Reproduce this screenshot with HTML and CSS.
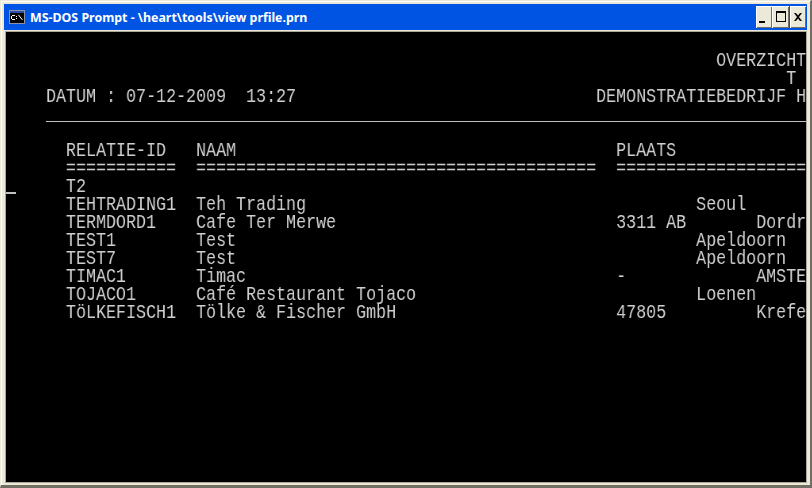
FILE: index.html
```html
<!DOCTYPE html>
<html lang="nl">
<head>
<meta charset="utf-8">
<title>MS-DOS Prompt</title>
<link rel="stylesheet" href="styles.css">
</head>
<body>
<div class="window">
  <header class="titlebar">
    <svg class="app-icon" width="16" height="14" viewBox="0 0 16 14" aria-hidden="true">
      <rect x="0.5" y="0.5" width="15" height="13" fill="#000" stroke="#8a93a8"/>
      <rect x="1" y="1" width="14" height="2" fill="#2a4fa8"/>
      <rect x="3" y="5" width="3" height="1" fill="#fff"/><rect x="2" y="6" width="1" height="3" fill="#fff"/><rect x="3" y="9" width="3" height="1" fill="#fff"/>
      <rect x="7" y="6" width="1" height="1" fill="#fff"/><rect x="7" y="8" width="1" height="1" fill="#fff"/>
      <path d="M9.500 5 L13.500 10" stroke="#fff" stroke-width="1"/>
    </svg>
    <span class="title">MS-DOS Prompt - \heart\tools\view prfile.prn</span>
    <div class="controls">
      <button class="ctl ctl-min" aria-label="Minimize"><svg width="16" height="20" viewBox="0 0 16 20"><rect x="3" y="14" width="6" height="2" fill="#000"/></svg></button>
      <button class="ctl ctl-max" aria-label="Maximize"><svg width="16" height="20" viewBox="0 0 16 20"><path d="M3 4h10v11H3z M4 6v8h8V6z" fill="#000" fill-rule="evenodd"/></svg></button>
      <button class="ctl ctl-close" aria-label="Close"><svg width="16" height="20" viewBox="0 0 16 20"><path d="M4 6h2l2 2.500 2-2.500h2l-3 4 3 4h-2l-2-2.500-2 2.500h-2l3-4z" fill="#000"/></svg></button>
    </div>
  </header>
  <main class="console">
    <div class="cursor"></div>
    <pre class="rows">                                                                       OVERZICHT
                                                                              T
    DATUM : 07-12-2009  13:27                              DEMONSTRATIEBEDRIJF H</pre>
    <div class="rule"></div>
    <pre class="rows">      RELATIE-ID   NAAM                                      PLAATS
      ===========  ========================================  ===================
      T2
      TEHTRADING1  Teh Trading                                       Seoul
      TERMDORD1    Cafe Ter Merwe                            3311 AB       Dordr
      TEST1        Test                                              Apeldoorn
      TEST7        Test                                              Apeldoorn
      TIMAC1       Timac                                     -             AMSTE
      TOJACO1      Café Restaurant Tojaco                            Loenen
      TöLKEFISCH1  Tölke &amp; Fischer GmbH                      47805         Krefe</pre>
  </main>
</div>
</body>
</html>
```
FILE: styles.css
```css
* { box-sizing: border-box; }
html, body { margin: 0; padding: 0; background: #ece9d8; }
body { width: 812px; height: 488px; overflow: hidden; }
.window {
  width: 812px; height: 488px;
  display: flex; flex-direction: column;
  background: #ece9d8;
  padding: 3px 4px 2px 4px;
  border-top: 1px solid #ece9d8;
  border-left: 1px solid #ece9d8;
  border-right: 2px solid #716f64;
  border-bottom: 3px solid #716f64;
  box-shadow: inset 1px 1px 0 #fff;
}
.titlebar {
  height: 26px; flex: none; margin: 0 -1px;
  background: #0054e3;
  display: flex; align-items: center;
  padding: 0 0 0 5px;
  color: #fff;
}
.app-icon { flex: none; margin-right: 5px; }
.title {
  font: bold 12.4px "Noto Sans", "Liberation Sans", Arial, sans-serif;
  white-space: nowrap; flex: 1;
}
.controls { display: flex; gap: 0; margin-right: 1px; }
.ctl {
  width: 16px; height: 22px; padding: 0; margin: 0;
  background: #ece9d8; border: 0;
  box-shadow: inset 1px 1px 0 #fff, inset -1px -1px 0 #716f64;
  display: flex; align-items: center; justify-content: center;
}
.ctl-max { width: 17px; }
.ctl-close { margin-left: 1px; }
.ctl svg { display: block; }
.console {
  position: relative;
  flex: none; width: 800px; height: 450px;
  margin-top: 2px; margin-left: 1px;
  background: #000;
  overflow: hidden;
  padding-top: 20px;
  outline: 1px solid #aca899;
  outline-offset: 0;
}
.rows {
  margin: 0; padding: 0;
  width: 1008px;
  font-family: "Liberation Mono", "Courier New", monospace;
  font-size: 21px; line-height: 18px;
  color: #cfcfcf;
  transform: scaleX(0.7937);
  transform-origin: 0 0;
  will-change: transform;
  white-space: pre;
}
.rule { height: 36px; margin-left: 40px; }
.rule::before { content: ""; display: block; height: 15px; border-bottom: 1px solid #c0c0c0; }
.cursor { position: absolute; left: 0; top: 160px; width: 10px; height: 2px; background: #c0c0c0; }
```
